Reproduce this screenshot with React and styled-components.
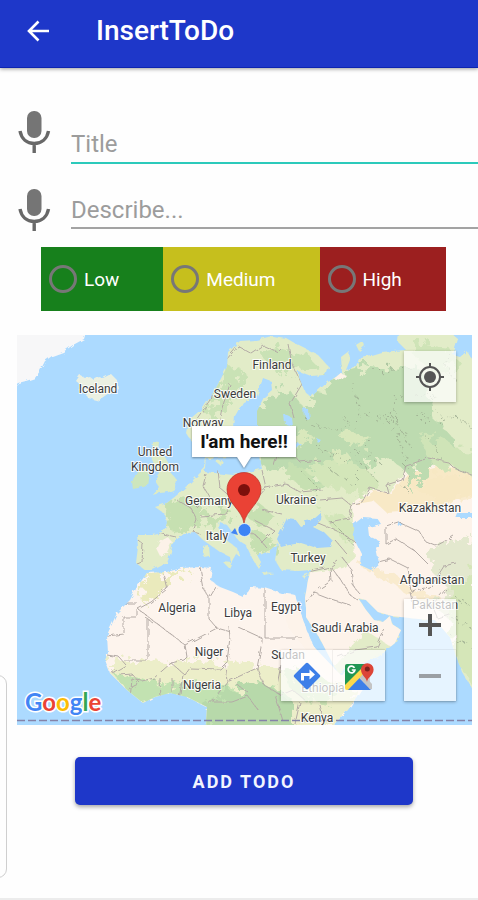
import React from "react";
import styled, { createGlobalStyle } from "styled-components";

const GlobalStyle = createGlobalStyle`
  * {
    box-sizing: border-box;
  }

  body {
    margin: 0;
    background: #fefefe;
    font-family: Roboto, "Liberation Sans", sans-serif;
  }

  button {
    border: 0;
    padding: 0;
    cursor: pointer;
    font-family: inherit;
  }
`;

const priorities = [
  { value: "low", label: "Low", color: "#17801c" },
  { value: "medium", label: "Medium", color: "#c6bf1d" },
  { value: "high", label: "High", color: "#9c1f1f" },
];

const countries = [
  { name: "Iceland", x: 98, y: 393 },
  { name: "Finland", x: 272, y: 369 },
  { name: "Sweden", x: 235, y: 398 },
  { name: "Norway", x: 203, y: 427 },
  { name: "United", x: 155, y: 456 },
  { name: "Kingdom", x: 155, y: 471 },
  { name: "Germany", x: 209, y: 505 },
  { name: "Ukraine", x: 296, y: 504 },
  { name: "Kazakhstan", x: 430, y: 512 },
  { name: "Italy", x: 217, y: 540 },
  { name: "Turkey", x: 308, y: 562 },
  { name: "Afghanistan", x: 432, y: 584 },
  { name: "Pakistan", x: 435, y: 609 },
  { name: "Algeria", x: 177, y: 612 },
  { name: "Libya", x: 238, y: 617 },
  { name: "Egypt", x: 286, y: 611 },
  { name: "Saudi Arabia", x: 345, y: 632 },
  { name: "Niger", x: 209, y: 656 },
  { name: "Sudan", x: 288, y: 659 },
  { name: "Nigeria", x: 202, y: 689 },
  { name: "Ethiopia", x: 323, y: 692 },
  { name: "Kenya", x: 317, y: 722 },
];

function App() {
  const [title, setTitle] = React.useState("");
  const [description, setDescription] = React.useState("");
  const [priority, setPriority] = React.useState("");

  return (
    <>
      <GlobalStyle />
      <Page>
        <Header>
          <BackButton type="button" aria-label="Back">
            <svg width="24" height="22" viewBox="0 0 24 22">
              <path
                d="M12.500 1.500L3 11l9.500 9.500M3 11h20"
                fill="none"
                stroke="#fff"
                strokeWidth="2.600"
              />
            </svg>
          </BackButton>
          <h1>InsertToDo</h1>
        </Header>
        <Form onSubmit={(event) => event.preventDefault()}>
          <Field $height={78}>
            <MicButton label="Dictate title" />
            <TextInput
              $active
              aria-label="Title"
              placeholder="Title"
              value={title}
              onChange={(event) => setTitle(event.target.value)}
            />
          </Field>
          <Field $height={65}>
            <MicButton label="Dictate description" />
            <TextInput
              aria-label="Describe"
              placeholder="Describe..."
              value={description}
              onChange={(event) => setDescription(event.target.value)}
            />
          </Field>
          <PriorityGroup role="radiogroup" aria-label="Priority">
            {priorities.map((item) => {
              return (
                <Priority key={item.value} $color={item.color}>
                  <input
                    type="radio"
                    name="priority"
                    value={item.value}
                    checked={priority === item.value}
                    onChange={() => setPriority(item.value)}
                  />
                  {item.label}
                </Priority>
              );
            })}
          </PriorityGroup>
          <MapView />
          <SubmitButton type="submit">ADD TODO</SubmitButton>
        </Form>
        <SidePanel />
      </Page>
    </>
  );
}

export default App;

const Page = styled.div`
  position: relative;
  display: flex;
  flex-direction: column;
  min-height: 100vh;
  border-bottom: 2px solid #ececec;
`;

const Header = styled.header`
  display: flex;
  align-items: center;
  gap: 46px;
  height: 68px;
  padding: 0 26px 6px;
  background: #1e37c9;
  border-bottom: 1px solid #0d24b0;
  box-shadow: 0 1px 4px rgba(0, 0, 0, 0.4);
  color: #fff;

  h1 {
    margin: 0;
    font-size: 28px;
    line-height: 32px;
    font-weight: 500;
  }
`;

const BackButton = styled.button`
  display: flex;
  background: none;
`;

const Form = styled.form`
  display: flex;
  flex-direction: column;
  padding-top: 42px;
`;

const Field = styled.div`
  display: flex;
  align-items: flex-start;
  gap: 20px;
  height: ${({ $height }) => $height}px;
  padding-left: 18px;
`;

const StyledMicButton = styled.button`
  display: flex;
  background: none;
`;

function MicButton({ label }) {
  return (
    <StyledMicButton type="button" aria-label={label}>
      <svg width="33" height="44" viewBox="0 0 33 44">
        <rect x="9" y="1" width="14.500" height="27" rx="7" fill="#757575" />
        <path
          d="M2 21C3.500 29 9 33.500 16.200 33.500S29 29 30.500 21M16.200 33.500V43"
          fill="none"
          stroke="#686868"
          strokeWidth="3.400"
        />
      </svg>
    </StyledMicButton>
  );
}

const TextInput = styled.input`
  flex: 1;
  min-width: 0;
  height: ${({ $active }) => ($active ? 54 : 41)}px;
  padding: ${({ $active }) => ($active ? "16px 0 0" : "4px 0 0")};
  border: 0;
  border-bottom: 2px solid ${({ $active }) => ($active ? "#2ccabb" : "#a3a3a3")};
  border-radius: 0;
  outline: 0;
  background: none;
  color: #333;
  font-family: inherit;
  font-size: 24px;

  &::placeholder {
    color: #9c9c9c;
  }
`;

const PriorityGroup = styled.div`
  display: flex;
  align-self: flex-start;
  margin: -6px 0 24px 41px;
`;

const Priority = styled.label`
  display: flex;
  align-items: center;
  gap: 7px;
  height: 64px;
  padding: 0 44px 0 8px;
  background: ${({ $color }) => $color};
  color: #fff;
  font-size: 19px;

  input {
    appearance: none;
    width: 28px;
    height: 28px;
    margin: 0;
    border: 3px solid #777;
    border-radius: 50%;
  }

  input:checked {
    box-shadow: inset 0 0 0 5px ${({ $color }) => $color};
    background: #fff;
  }
`;

const SubmitButton = styled.button`
  height: 48px;
  margin: 32px 65px 32px 75px;
  border-radius: 5px;
  background: #1e37c9;
  box-shadow: 0 2px 4px rgba(0, 0, 0, 0.35);
  color: #f2f4ff;
  font-size: 18px;
  font-weight: 700;
  letter-spacing: 2px;
`;

const SidePanel = styled.aside`
  position: absolute;
  left: -12px;
  bottom: 20px;
  width: 19px;
  height: 203px;
  border: 1px solid #cfcfcf;
  border-radius: 9px;
  background: #fefefe;
`;

const MapFrame = styled.div`
  position: relative;
  margin: 0 6px 0 17px;
  aspect-ratio: 455 / 390;
  overflow: hidden;
`;

const MapCanvas = styled.svg`
  display: block;
  width: 100%;
  height: 100%;

  .country {
    fill: #3b3b3b;
    stroke: #fff;
    stroke-opacity: 0.85;
    stroke-width: 2px;
    paint-order: stroke;
    font-size: 12px;
    text-anchor: middle;
  }

  .callout {
    fill: #111;
    font-size: 19px;
    font-weight: 700;
    text-anchor: middle;
  }

  .logo {
    stroke: #fff;
    stroke-width: 3px;
    paint-order: stroke;
    font-family: Lato, Roboto, sans-serif;
    font-size: 24px;
    font-weight: 700;
  }
`;

const MapControls = styled.div`
  position: absolute;
  right: ${({ $right }) => $right}px;
  ${({ $top }) => ($top ? `top: ${$top}px;` : "bottom: 24px;")}
  display: flex;
  flex-direction: ${({ $column }) => ($column ? "column" : "row")};
  background: rgba(255, 255, 255, 0.7);
  box-shadow: 0 1px 3px rgba(0, 0, 0, 0.3);
`;

const MapButton = styled.button`
  display: flex;
  align-items: center;
  justify-content: center;
  width: 52px;
  height: 51px;
  background: none;

  & + & {
    box-shadow: 0 0 1px rgba(0, 0, 0, 0.3);
  }
`;

function MapView() {
  return (
    <MapFrame>
      <MapCanvas
        viewBox="17 335 455 390"
        preserveAspectRatio="xMidYMid slice"
        role="img"
        aria-label="Map with the current position"
      >
        <Terrain />
        {countries.map((country) => (
          <text
            key={country.name}
            className="country"
            x={country.x}
            y={country.y}
          >
            {country.name}
          </text>
        ))}
        <text className="logo" x="25" y="711">
          <tspan fill="#4285f4">G</tspan>
          <tspan fill="#ea4335">o</tspan>
          <tspan fill="#fbbc05">o</tspan>
          <tspan fill="#4285f4">g</tspan>
          <tspan fill="#34a853">l</tspan>
          <tspan fill="#ea4335">e</tspan>
        </text>
        <Marker />
      </MapCanvas>
      <MapControls $right={16} $top={16}>
        <MapButton type="button" aria-label="My location">
          <svg width="28" height="28" viewBox="0 0 28 28">
            <circle cx="14" cy="14" r="6" fill="#555" />
            <circle
              cx="14"
              cy="14"
              r="10"
              fill="none"
              stroke="#555"
              strokeWidth="2"
            />
            <path
              d="M14 0v5M14 23v5M0 14h5M23 14h5"
              stroke="#555"
              strokeWidth="2"
            />
          </svg>
        </MapButton>
      </MapControls>
      <MapControls $right={87}>
        <MapButton type="button" aria-label="Directions">
          <svg width="28" height="28" viewBox="0 0 28 28">
            <path
              d="M12.500 1.600a2 2 0 0 1 3 0l10.900 10.900a2 2 0 0 1 0 3L15.500 26.400a2 2 0 0 1-3 0L1.600 15.500a2 2 0 0 1 0-3z"
              fill="#3d7fe8"
            />
            <path
              d="M9.500 18.500v-6h9"
              fill="none"
              stroke="#fff"
              strokeWidth="3"
            />
            <path d="M16.500 7.500l5.500 5-5.500 5z" fill="#fff" />
          </svg>
        </MapButton>
        <MapButton type="button" aria-label="Open in maps">
          <svg width="30" height="30" viewBox="0 0 30 30">
            <path d="M1 5q0-2 2-2h20L1 26z" fill="#219653" />
            <path d="M15 14l11-3v15q0 2-2 2z" fill="#d0d0d0" />
            <path d="M1 24L20 5l4 4L5 29H3q-2 0-2-2z" fill="#fdd94c" />
            <path d="M4 29l11.500-12L27 29z" fill="#3d7fe8" />
            <path d="M15.500 17l3.500-4 9 10v5l-1.500.5z" fill="#c4c4c4" />
            <path
              d="M10.500 6.800A3.400 3.400 0 1 0 10.900 9H7.800"
              fill="none"
              stroke="#fff"
              strokeWidth="1.700"
            />
            <path
              d="M23 21c-.6-5-6-6.500-6-12.500a6.300 6.300 0 0 1 12.600 0C29.600 14.500 23.600 16 23 21z"
              fill="#dc4437"
            />
            <circle cx="23.300" cy="8" r="2.500" fill="#7b231e" />
          </svg>
        </MapButton>
      </MapControls>
      <MapControls $right={16} $column>
        <MapButton type="button" aria-label="Zoom in">
          <svg width="24" height="24" viewBox="0 0 24 24">
            <path d="M1 12h22M12 1v22" stroke="#555" strokeWidth="4" />
          </svg>
        </MapButton>
        <MapButton type="button" aria-label="Zoom out">
          <svg width="24" height="24" viewBox="0 0 24 24">
            <path d="M1 12h22" stroke="#9a9fa4" strokeWidth="4" />
          </svg>
        </MapButton>
      </MapControls>
    </MapFrame>
  );
}

function Marker() {
  return (
    <g>
      <path d="M231 533l4-5 3 7z" fill="#4285f4" />
      <circle
        cx="244.500"
        cy="530"
        r="6.500"
        fill="#3d84f5"
        stroke="#fff"
        strokeOpacity="0.6"
      />
      <path
        d="M244 523c-2-13-17-20-17-33.500a17 17 0 0 1 34 0C261 503 246 510 244 523z"
        fill="#ea4235"
        stroke="#b93028"
        strokeWidth="0.700"
      />
      <circle cx="244" cy="490" r="6" fill="#7d100c" />
      <path
        d="M192 426h104v31h-45l-7 11-7-11h-45z"
        fill="#fff"
        style={{ filter: "drop-shadow(0 1px 1px rgba(0, 0, 0, 0.4))" }}
      />
      <text className="callout" x="244" y="448">
        I'am here!!
      </text>
    </g>
  );
}

function Terrain() {
  return (
    <g>
      <defs>
        <filter id="rough" x="-5%" y="-5%" width="110%" height="110%">
          <feTurbulence
            type="fractalNoise"
            baseFrequency="0.14"
            numOctaves="3"
            seed="4"
          />
          <feDisplacementMap in="SourceGraphic" scale="5" />
        </filter>
        <filter id="ragged" x="-10%" y="-10%" width="120%" height="120%">
          <feTurbulence
            type="fractalNoise"
            baseFrequency="0.1"
            numOctaves="4"
            seed="9"
          />
          <feDisplacementMap in="SourceGraphic" scale="26" />
        </filter>
        <clipPath id="land">
          <path d={EUROPE} />
          <path d={AFRICA} />
        </clipPath>
      </defs>
      <rect x="17" y="335" width="455" height="390" fill="#acdaff" />

      <g filter="url(#rough)">
        <path
          d="M10 325H88L84 339 73 345 63 352 52 356 45 361 40 371 35 378 26 381 18 383 10 390z"
          fill="#f7f7f8"
        />
        <path
          d="M80 375l6 3 4-1 4 3 5-3 4 1 8-4 6 6 1 8-8 6-10 7-12-3-3-7-8-2 5-3-6-5z"
          fill="#ebf0e2"
        />
        <path
          d="M152 441l7 1-1 8 6 6 5 8 1 8 7 8-1 8-7 4-9 1-8 2 7-8-4-6 5-7-5-9-4-9z"
          fill="#dcebc5"
        />
        <path d="M137 471l8-4 5 6-2 13-15 3-1-7z" fill="#cde6bd" />
        <path d={EUROPE} fill="#e2ecc8" />
        <path d={AFRICA} fill="#fdf4ed" />
      </g>

      <g clipPath="url(#land)">
        {/* deserts and steppe */}
        <g filter="url(#rough)">
          <path
            d="M352 503l20-14 17 3 16-20 30-8 48 9v175h-90l-28-18-38 46-40-50-4-28 24-25 36-5 12-10z"
            fill="#fdf3ea"
          />
          <path
            d="M354 505l20-14 17 2 16-19 30-8 46 8v18l-30 8-18 13-20-3-29 2-12-11-12 2z"
            fill="#f8e9c6"
          />
        </g>
        <g filter="url(#ragged)">
          <path
            d="M410 490l30-15 42 5v16l-40 6zM352 560l20 14 20 8 16 14 30 14 20-2-15-10-30-8-20-18-20-4z"
            fill="#f6e7c2"
            opacity="0.7"
          />
          <path
            d="M428 550l24-8 26-2v75l-22 10-18-15 8-24-14-14z"
            fill="#e3e8ce"
          />
          <path d="M450 580l28-10v125l-26-45-3-30z" fill="#d5e6b8" />
          <path
            d="M110 662l25-2 30 4 30-3 40 2 40 4 36 14 25 3 25 10-30 40H200l-90-40z"
            fill="#eceec9"
          />
          <path
            d="M112 672l20 4 20 6 40 4 28-2 20 6 12-6 12 4 18 3 14 12-12 24H200v-20l-25-5-35 8z"
            fill="#c2e2b1"
          />
          <path d="M230 690l30-8 38 22-8 30H205v-28z" fill="#b7d9aa" />
          <path
            d="M286 668l30 4 18 14-8 18-22-4-14-12z"
            fill="#cbe3b4"
          />
          <path
            d="M140 582l24-8 30-4-20 10-12 12-20 12z"
            fill="#eaeabc"
          />

          {/* northern forests */}
          <path
            d="M250 410l20-15 20-5 14 18 10-12 12-8 10-12 14-6 20-4 18 2 30-2 10 26 10 32 18 16-16 18-18 16-10 20-8-24-14-12-20 3-12 14-24-6-22 22-10-16-18-8-16 6-14-30z"
            fill="#bddbb0"
          />
          <path
            d="M420 440l20-4 20 14 22 2v28l-24-8-24-6zM412 340l34 4 14 20-20 12-22-16z"
            fill="#cfe4b7"
          />
          <path
            d="M262 355l20-6 30 8 8 14-24-4-18 8zM228 365l14 4-4 22-22 28-12 6 8-20z"
            fill="#c9e2b5"
          />
          <path
            d="M164 500l22-4 18 12-8 20-24 4zM246 504l16 2 14 12-10 10-16-8zM250 530l20 6 6 12-20 6zM196 516l34-6 8 8-36 6zM284 460l20 8 14 12-10 10-20-10z"
            fill="#c6e0b1"
          />
          <path
            d="M304 470l30-10 30 8 16 14-24 14-30-10zM320 510l24 6 16 14 4 14-22-4z"
            fill="#d3e6b9"
          />
        </g>
        <g fill="#d9e8bc" filter="url(#ragged)">
          <path d="M348 432l22 4-8 10-18-4zM290 436l20-4 2 8-18 6zM330 455l12-8 10 12-14 6z" />
        </g>
        <g fill="#fcf2e8" filter="url(#rough)">
          <path d="M160 540l7-4 5 6-5 10-7 4-4-8z" />
          <path d="M330 378l8-6 8 3-4 5z" />
        </g>

        {/* inner waters */}
        <g fill="#acdaff" filter="url(#rough)">
          <path d="M263 378l8 3 1 9-8 7-7 14v22l10 12 34-2-8 8-34 4 2 14-28 6-28-3 1-14 26-1 6-10-4-18 1-13 8-14 14-6z" />
          <path
            d="M287 518l8 1 6 8 5-2-2-5 10-1 8-7-1 8-8 7 12 6 8 8-2 6-14 1-16-5-12 2-8 2-4-8z"
            fill="#a2d1fb"
          />
          <path d="M363 517l14 1 4 6-13 3 1 9 12 6-5 6 3 15-8 7-11-5 1-12-7-14-1-14z" />
          <path d="M284 414l8 4 1 8-8-2zM304 408l5 2 1 10-5-1zM316 438l5 2-3 3z" />
          <path d="M446 325h28v38l-7-12-7 6-7-2 5-16-9-8z" />
          <path d="M398 521l5 3-4 3zM455 518h20v-5h-18z" />
        </g>

        {/* borders */}
        <g
          fill="none"
          stroke="#b3aaa5"
          strokeWidth="1"
          filter="url(#rough)"
        >
          <path d="M163 573l4 16-16 13-13 7 47 36 2 12-3 3-13 3-17 15-12 3-10-2-2 20M185 645l32-17 14 4M200 567l4 23 5 7v22l8 9M210 597l6-10M137 603h-16M137 609v8h-13v17l-17 2M148 620v40h-24M146 618l6 4M107 655l12 2 7 8-14 8M120 675l12-1 8 9-12 6M170 662l15 13 5-7 30 1 7-7 3-25-1-10M183 675l-4 24M172 678v14M160 678l1 20M225 665l2 16-14 20M265 588v50h38M262 642v-4l-24-11M262 642l-5 26 7 17M257 668l-30 14M264 685l17 10 12-5 12 10M236 684l12 8M208 702h24l16-6 10 14M281 665l-4 20M300 702l-5 22M320 705l4 18M275 695l8 26" />
          <path d="M308 572l22-5 8-6M330 567l1 14-18 12-6 10M331 567l12 16 7 12 8 5M313 592l18 7 19 6M355 650l22-3 8-18M338 657l18-7M342 557l9 12 2 16 6 8M378 562l12-3 12 6 8 4M386 544v-18l12-4 22 10 6 10 10 4 18-10M386 544l10-5 18 11 14 14M408 568l2 14 2 10 18-4 14-22 12-3M410 592l4 16 18-3 14-16M432 605l6 14 12-4" />
          <path d="M138 540l5 4-1 18-5 2M158 533l18 4M177 500l14 8 6 12-4 12 8 2M206 474l-3 12 6 10-12 12M218 470l2 18 14 12-8 14-26 2M240 474l-2 12M262 470l4 18-12 14-16 2M266 488l20-4 14 8 22-2M262 510l20 4M254 520l20 10-14 14M245 530l12 6 10 12M352 504l10-2 8-14 18 5-2-8 16-5 4-14 22-8 20 4 6 6 20 8M320 500l22-2 10 8-3 12-20 4M335 540l12 14M318 523l24 10 14 10" />
          <path d="M196 420l14-20 4-20 12-20 12-14 14 8 12-8 14 6 6-6M218 428l4-20 8-24M288 344l4 20 10 20-12 20 4 14M262 440l24 6 14 16 20-2M280 446l-6 20" />
        </g>
        <g
          fill="none"
          stroke="#98a68c"
          strokeWidth="1"
          strokeDasharray="3 3"
          strokeOpacity="0.8"
          filter="url(#ragged)"
        >
          <path d="M355 384l4 30-18 22M366 416l30 4 12 24M310 424l40 6M398 392l-4 40 14 28-6 28M370 440l-8 24 12 14M320 450l30 10 14-8 20 14M330 470l20 12 10-10M300 470l14 14 4 16M420 420l24-6 28 12M412 392l28 8M430 440l12 20M452 618l20 10M455 640l18 8M458 600l16 4M330 520l14 14 10 12M372 370l40-2M446 350l6 30" />
        </g>
      </g>

      <g fill="#e0ecc7" filter="url(#rough)">
        <path d="M203 546l5-1 1 11-5 1zM222 561l10 1-3 6z" />
        <path d="M262 572l12 1-10 2zM302 576l8-3-6 5z" />
        <path d="M356 345l6-4 3 5-6 5zM215 461l8-1-2 6zM318 392l6-4 2 6z" />
      </g>
      <path
        d="M17 720.500H472"
        stroke="#8583a8"
        strokeWidth="1.500"
        strokeDasharray="8 3"
      />
    </g>
  );
}

const EUROPE =
  "M240 341L228 352 227 367 215 390 203 408 190 419 187 434 192 442 204 440 212 452 206 456 205 468 200 473 190 483 177 495 167 503 155 507 165 514 167 523 163 533 153 535 137 535 138 547 136 563 145 570 153 570 167 563 170 555 173 543 185 533 195 532 203 540 220 552 230 557 231 563 236 554 240 556 238 549 225 539 219 528 220 522 227 525 238 540 246 545 253 560 259 569 262 563 258 556 270 550 278 543 275 560 281 570 298 571 311 570 308 580 305 598 306 608 306 617 319 637 331 660 338 673 350 668 378 657 395 643 401 630 392 624 390 616 383 622 374 620 366 610 358 598 366 600 378 612 392 616 418 619 435 620 442 628 450 637 455 653 462 672 473 690 485 680V325H400L398 342 406 350 381 352 371 355 360 357 355 368 346 370 350 360 349 351 341 357 342 372 336 377 328 382 321 388 311 397 305 392 298 375 298 371 311 376 325 375 328 366 318 355 298 345 286 338 272 336 256 340z";

const AFRICA =
  "M147 573L167 572 182 568 200 567 212 568 210 580 220 587 233 592 242 596 248 592 251 587 265 588 281 593 295 595 299 608 309 637 314 647 330 664 340 674 371 669 370 678 361 690 348 710 335 723 330 735H205L207 707 197 702 187 697 170 693 155 697 143 703 127 690 110 673 105 660 108 653 107 635 117 613 130 600 137 587z";
